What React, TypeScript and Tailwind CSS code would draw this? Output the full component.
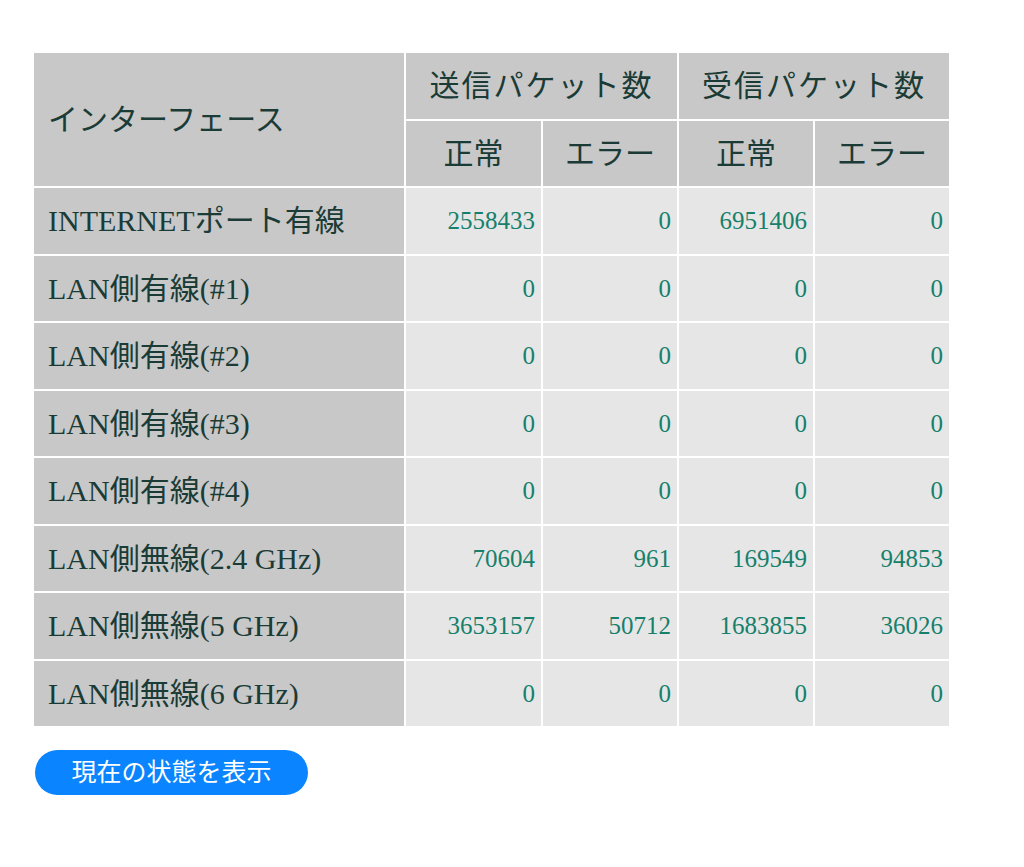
export default function App() {
  const rows: [string, string[]][] = [
    ["INTERNETポート有線", ["2558433", "0", "6951406", "0"]],
    ["LAN側有線(#1)", ["0", "0", "0", "0"]],
    ["LAN側有線(#2)", ["0", "0", "0", "0"]],
    ["LAN側有線(#3)", ["0", "0", "0", "0"]],
    ["LAN側有線(#4)", ["0", "0", "0", "0"]],
    ["LAN側無線(2.4 GHz)", ["70604", "961", "169549", "94853"]],
    ["LAN側無線(5 GHz)", ["3653157", "50712", "1683855", "36026"]],
    ["LAN側無線(6 GHz)", ["0", "0", "0", "0"]],
  ];
  const font = { fontFamily: '"Liberation Serif","Noto Sans CJK JP",serif' };
  return (
    <div className="w-[1024px] h-[867px] bg-white pt-[53px] pl-[34px]" style={font}>
      <div className="grid grid-cols-[370px_135px_134px_134px_134px] auto-rows-[65.5px] gap-[2px] w-[915px] text-[#1b3b36]">
        <div className="row-span-2 bg-[#c8c8c8] flex items-center pl-[14px] text-[30px]">インターフェース</div>
        <div className="col-span-2 bg-[#c8c8c8] flex items-center justify-center text-[30px] tracking-[2px]">送信パケット数</div>
        <div className="col-span-2 bg-[#c8c8c8] flex items-center justify-center text-[30px] tracking-[2px]">受信パケット数</div>
        {["正常", "エラー", "正常", "エラー"].map((t, i) => (
          <div key={i} className="bg-[#c8c8c8] flex items-center justify-center text-[30px]">{t}</div>
        ))}
        {rows.map(([name, vals]) => (
          <>
            <div key={name} className="bg-[#c8c8c8] flex items-center pl-[14px] text-[30px]">{name}</div>
            {vals.map((v, i) => (
              <div key={name + i} className="bg-[#e6e6e6] flex items-center justify-end pr-[6px] text-[25px] text-[#16806b]">{v}</div>
            ))}
          </>
        ))}
      </div>
      <button className="mt-[24px] ml-[1px] w-[273px] h-[45px] rounded-full bg-[#0a84ff] text-white text-[25px] flex items-center justify-center" style={font}>現在の状態を表示</button>
    </div>
  );
}
